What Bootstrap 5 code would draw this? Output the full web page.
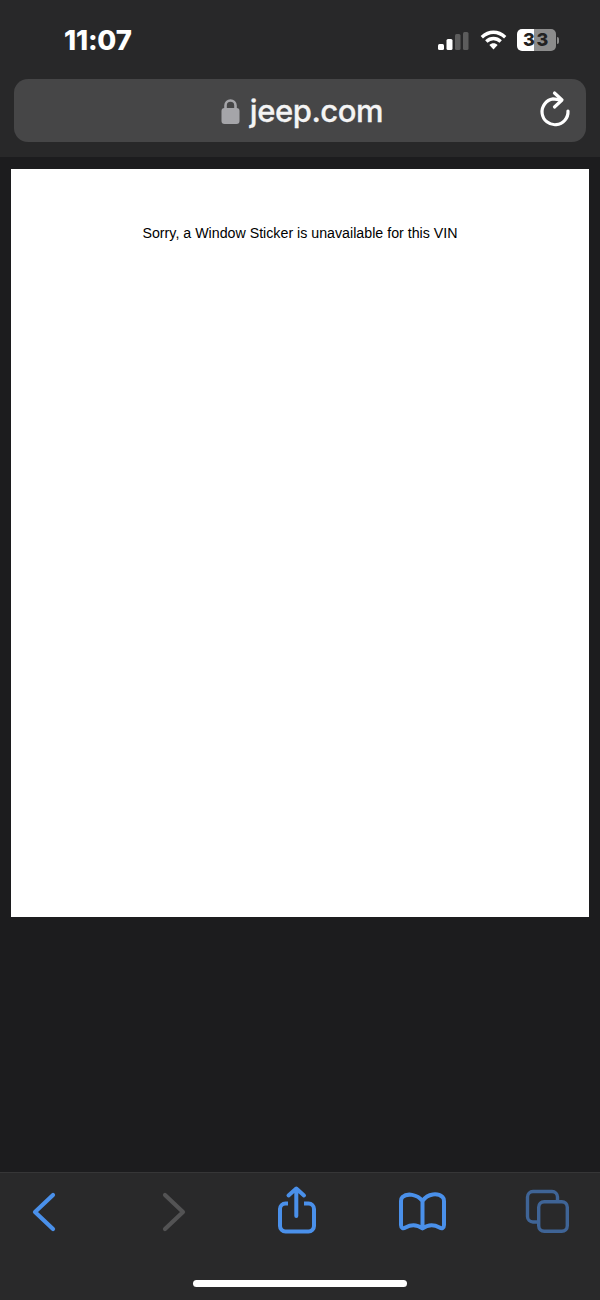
<!DOCTYPE html>
<html lang="en">
<head>
<meta charset="utf-8">
<title>jeep.com</title>
<link href="https://cdn.jsdelivr.net/npm/bootstrap@5.3.0/dist/css/bootstrap.min.css" rel="stylesheet">
<style>
html,body{margin:0;height:1300px;overflow:hidden;background:#1c1c1e}
.phone-wrap{width:600px;height:1300px}
.top-chrome{height:157px;background:#282829;flex:none}
.status-row{height:79px;padding:23px 41px 0 64px}
.clock{font:800 27.500px/1.3 "Inter","Liberation Sans",sans-serif;color:#fff;letter-spacing:-.2px}
.status-icons{margin-top:6px}
.sig-icon{margin-right:11px;margin-top:2px}
.wifi-icon{margin-right:10px}
.batt{width:39px;height:22px;border-radius:5px;background:linear-gradient(90deg,#fff 0 17px,#8c8c8c 17px);font:800 18px/22px "Inter","Liberation Sans",sans-serif;color:#222;text-align:center;letter-spacing:1.800px}
.batt-nub{width:2px;height:7px;background:#8c8c8c;border-radius:0 2px 2px 0;margin-left:1px}
.url-pill{height:63px;margin:0 14px;background:#464647;border-radius:14px;display:grid;grid-template-columns:1fr auto 1fr;align-items:center}
.url-group{gap:10px;margin-left:4px}
.url-text{font:500 31px/1 "Inter","Liberation Sans",sans-serif;color:#f4f4f4;letter-spacing:-.45px;margin-top:-1px;-webkit-text-stroke:.3px #f4f4f4}
.reload{justify-self:end;margin-right:14px}
.page-area{padding:12px 11px 0;flex:1 1 auto;background:#1c1c1e}
.sheet{height:748px;background:#fff;padding-top:55px;text-align:center;font:14.230px/18px "Liberation Sans",Arial,sans-serif;color:#000}
.bottom-bar{height:128px;flex:none;background:#29292a;border-top:1px solid #363637;padding:7px 0 0 13px}
.tool-row{gap:66px}
.home-pill{width:214px;height:7px;border-radius:4px;background:#fff;margin:40px 0 0 180px}
</style>
</head>
<body>
<div class="phone-wrap d-flex flex-column">
  <header class="top-chrome">
    <div class="status-row d-flex justify-content-between align-items-start">
      <div class="clock">11:07</div>
      <div class="status-icons d-flex align-items-center">
        <svg class="sig-icon" width="31" height="18" viewBox="0 0 31 18" aria-hidden="true">
          <rect x="0" y="12" width="6" height="6" rx="1.5" fill="#fff"/>
          <rect x="8.500" y="7" width="6" height="11" rx="1.5" fill="#fff"/>
          <rect x="17" y="2" width="5.500" height="16" rx="1.500" fill="#5c5c5c"/>
          <rect x="25" y="0" width="5.500" height="18" rx="1.500" fill="#5c5c5c"/>
        </svg>
        <svg class="wifi-icon" width="27" height="20" viewBox="0 0 27 20" aria-hidden="true">
          <path d="M1.800 7.200C9 .6 18 .6 25.200 7.200" fill="none" stroke="#fff" stroke-width="3.400"/>
          <path d="M6.300 11.500C10.500 7.500 16.500 7.500 20.700 11.500" fill="none" stroke="#fff" stroke-width="3.400"/>
          <path d="M9.400 15 13.500 19.500 17.600 15C15.300 12.800 11.700 12.800 9.400 15Z" fill="#fff"/>
        </svg>
        <div class="batt">33</div>
        <div class="batt-nub"></div>
      </div>
    </div>
    <div class="url-pill">
      <span></span>
      <div class="url-group d-flex align-items-center">
        <svg width="19" height="26" viewBox="0 0 19 26" aria-hidden="true">
          <path d="M4.500 12V7.500a5 5 0 0 1 10 0V12" fill="none" stroke="#a5a5a9" stroke-width="2.600"/>
          <rect x="0.500" y="10" width="18" height="16" rx="3" fill="#a5a5a9"/>
        </svg>
        <span class="url-text">jeep.com</span>
      </div>
      <svg class="reload" width="34" height="42" viewBox="538 89.500 34 42" aria-hidden="true">
        <path d="M568 110.500A13 13 0 1 1 553 98.400Q557 98.700 560.500 99.500" fill="none" stroke="#fff" stroke-width="3.200" stroke-linecap="round"/>
        <path d="M554.500 92.500 562 99.500 554.500 106.500" fill="none" stroke="#fff" stroke-width="3.200" stroke-linecap="round" stroke-linejoin="round"/>
      </svg>
    </div>
  </header>
  <main class="page-area">
    <div class="sheet">Sorry, a Window Sticker is unavailable for this VIN</div>
  </main>
  <footer class="bottom-bar">
    <div class="tool-row d-flex">
      <svg width="60" height="60" viewBox="13 1180 60 60" aria-hidden="true"><path d="M53 1195 35 1212 53 1229" fill="none" stroke="#4a90ea" stroke-width="4.200" stroke-linecap="round" stroke-linejoin="round"/></svg>
      <svg width="60" height="60" viewBox="139 1180 60 60" aria-hidden="true"><path d="M165 1195 183 1212 165 1229" fill="none" stroke="#535354" stroke-width="4.200" stroke-linecap="round" stroke-linejoin="round"/></svg>
      <svg width="60" height="60" viewBox="265 1180 60 60" aria-hidden="true">
        <path d="M288 1203.500H285.500a5.500 5.500 0 0 0-5.500 5.500V1226a5.500 5.500 0 0 0 5.500 5.500H308.500a5.500 5.500 0 0 0 5.500-5.500V1209a5.500 5.500 0 0 0-5.500-5.500H304" fill="none" stroke="#4a90ea" stroke-width="4"/>
        <path d="M296.300 1216V1190M288.500 1195.500 296.300 1188.500 304 1195.500" fill="none" stroke="#4a90ea" stroke-width="4" stroke-linecap="round" stroke-linejoin="round"/>
      </svg>
      <svg width="60" height="60" viewBox="391 1180 60 60" aria-hidden="true">
        <path d="M422.500 1201C417 1194 407 1193 402.500 1197C401 1198.500 401 1199.500 401 1201V1225C401 1228 403 1229 405.500 1227.500C411 1224.500 417 1224.500 422.500 1228.500C428 1224.500 434 1224.500 439.500 1227.500C442 1229 444 1228 444 1225V1201C444 1199.500 444 1198.500 442.500 1197C438 1193 428 1193 422.500 1201ZM422.500 1201V1228" fill="none" stroke="#4a90ea" stroke-width="4" stroke-linejoin="round"/>
      </svg>
      <svg width="60" height="60" viewBox="517 1180 60 60" aria-hidden="true">
        <path d="M537 1222H533a5.500 5.500 0 0 1-5.500-5.500V1197a5.500 5.500 0 0 1 5.500-5.500H552a5.500 5.500 0 0 1 5.500 5.500V1201" fill="none" stroke="#3f6496" stroke-width="3.400"/>
        <rect x="538.700" y="1201.700" width="28.600" height="29.600" rx="5.500" fill="none" stroke="#3f6496" stroke-width="3.400"/>
      </svg>
    </div>
    <div class="home-pill"></div>
  </footer>
</div>
<script src="https://cdn.jsdelivr.net/npm/bootstrap@5.3.0/dist/js/bootstrap.bundle.min.js"></script>
</body>
</html>
